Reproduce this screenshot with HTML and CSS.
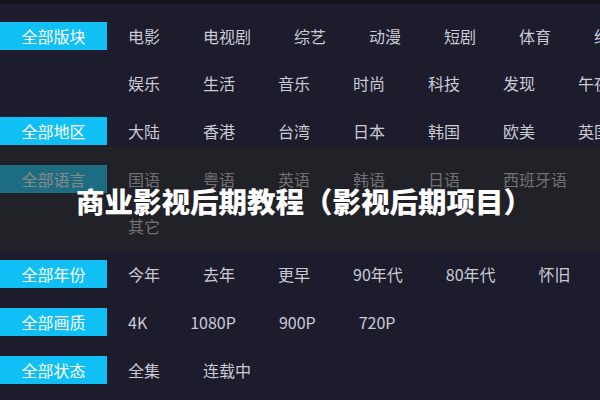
FILE: index.html
```html
<!DOCTYPE html>
<html lang="zh-CN">
<head>
<meta charset="utf-8">
<title>商业影视后期教程</title>
<link rel="stylesheet" href="styles.css">
</head>
<body>
<div class="page">
  <div class="filters">
    <div class="group">
      <span class="label">全部版块</span>
      <div class="opts">
        <div class="line"><span>电影</span><span>电视剧</span><span>综艺</span><span>动漫</span><span>短剧</span><span>体育</span><span>纪录片</span></div>
        <div class="line"><span>娱乐</span><span>生活</span><span>音乐</span><span>时尚</span><span>科技</span><span>发现</span><span>午夜</span></div>
      </div>
    </div>
    <div class="group">
      <span class="label">全部地区</span>
      <div class="opts">
        <div class="line"><span>大陆</span><span>香港</span><span>台湾</span><span>日本</span><span>韩国</span><span>欧美</span><span>英国</span></div>
      </div>
    </div>
    <div class="group">
      <span class="label">全部语言</span>
      <div class="opts">
        <div class="line"><span>国语</span><span>粤语</span><span>英语</span><span>韩语</span><span>日语</span><span>西班牙语</span></div>
        <div class="line"><span>其它</span></div>
      </div>
    </div>
    <div class="group">
      <span class="label">全部年份</span>
      <div class="opts">
        <div class="line"><span>今年</span><span>去年</span><span>更早</span><span>90年代</span><span>80年代</span><span>怀旧</span></div>
      </div>
    </div>
    <div class="group">
      <span class="label">全部画质</span>
      <div class="opts">
        <div class="line"><span>4K</span><span>1080P</span><span>900P</span><span>720P</span></div>
      </div>
    </div>
    <div class="group">
      <span class="label">全部状态</span>
      <div class="opts">
        <div class="line"><span>全集</span><span>连载中</span></div>
      </div>
    </div>
  </div>
  <div class="overlay">
    <h1 class="title">商业影视后期教程（影视后期项目）</h1>
  </div>
</div>
</body>
</html>
```

FILE: styles.css
```css
html, body {
  margin: 0;
  padding: 0;
  width: 600px;
  height: 400px;
  overflow: hidden;
  background: #1c1c2d;
}

.page {
  position: relative;
  width: 600px;
  height: 400px;
  overflow: hidden;
  border-top: 4px solid #13131d;
  box-sizing: border-box;
  font-family: "Noto Sans CJK SC", "Noto Sans", sans-serif;
  font-size: 16px;
}

.filters {
  padding-top: 8.5px;
  display: flex;
  flex-direction: column;
  gap: 1px;
}

.group {
  display: flex;
  align-items: flex-start;
}

.label {
  flex: none;
  width: 107px;
  height: 28px;
  line-height: 28px;
  margin-top: 9.5px;
  margin-right: 21px;
  background: #10c0f4;
  color: #ffffff;
  text-align: center;
}

.opts {
  display: flex;
  flex-direction: column;
}

.line {
  display: flex;
  height: 47px;
  line-height: 47px;
  white-space: nowrap;
  color: #cacad4;
}

.line span {
  margin-right: 43px;
}

.overlay {
  position: absolute;
  left: 0;
  right: 0;
  top: 143px;
  height: 103px;
  background: rgba(38, 38, 36, 0.55);
  display: flex;
  align-items: center;
  justify-content: center;
  padding-top: 6px;
  padding-left: 8px;
  box-sizing: border-box;
}

.title {
  margin: 0;
  color: #ffffff;
  font-size: 28.5px;
  font-weight: 900;
  line-height: 1;
  white-space: nowrap;
}
```
